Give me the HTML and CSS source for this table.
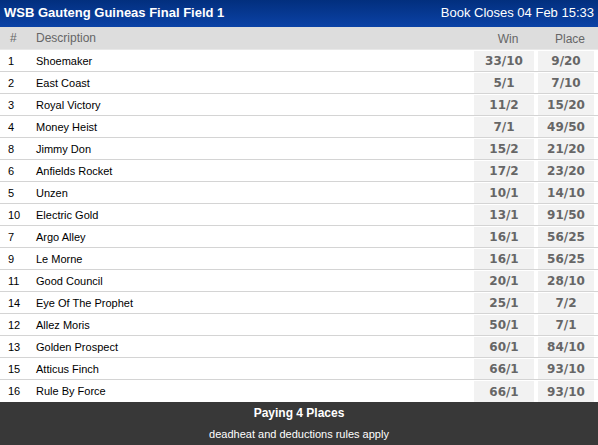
FILE: index.html
```html
<!DOCTYPE html>
<html>
<head>
<meta charset="utf-8">
<link rel="stylesheet" href="styles.css">
</head>
<body>
<div class="card">
  <div class="title">
    <span class="event">WSB Gauteng Guineas Final Field 1</span>
    <span class="closes">Book Closes 04 Feb 15:33</span>
  </div>
  <div class="row head">
    <div class="num">#</div>
    <div class="desc">Description</div>
    <div class="odds"><span>Win</span></div>
    <div class="odds place"><span>Place</span></div>
  </div>
  <div class="row"><div class="num">1</div><div class="desc">Shoemaker</div><div class="odds"><span>33/10</span></div><div class="odds place"><span>9/20</span></div></div>
  <div class="row"><div class="num">2</div><div class="desc">East Coast</div><div class="odds"><span>5/1</span></div><div class="odds place"><span>7/10</span></div></div>
  <div class="row"><div class="num">3</div><div class="desc">Royal Victory</div><div class="odds"><span>11/2</span></div><div class="odds place"><span>15/20</span></div></div>
  <div class="row"><div class="num">4</div><div class="desc">Money Heist</div><div class="odds"><span>7/1</span></div><div class="odds place"><span>49/50</span></div></div>
  <div class="row"><div class="num">8</div><div class="desc">Jimmy Don</div><div class="odds"><span>15/2</span></div><div class="odds place"><span>21/20</span></div></div>
  <div class="row"><div class="num">6</div><div class="desc">Anfields Rocket</div><div class="odds"><span>17/2</span></div><div class="odds place"><span>23/20</span></div></div>
  <div class="row"><div class="num">5</div><div class="desc">Unzen</div><div class="odds"><span>10/1</span></div><div class="odds place"><span>14/10</span></div></div>
  <div class="row"><div class="num">10</div><div class="desc">Electric Gold</div><div class="odds"><span>13/1</span></div><div class="odds place"><span>91/50</span></div></div>
  <div class="row"><div class="num">7</div><div class="desc">Argo Alley</div><div class="odds"><span>16/1</span></div><div class="odds place"><span>56/25</span></div></div>
  <div class="row"><div class="num">9</div><div class="desc">Le Morne</div><div class="odds"><span>16/1</span></div><div class="odds place"><span>56/25</span></div></div>
  <div class="row"><div class="num">11</div><div class="desc">Good Council</div><div class="odds"><span>20/1</span></div><div class="odds place"><span>28/10</span></div></div>
  <div class="row"><div class="num">14</div><div class="desc">Eye Of The Prophet</div><div class="odds"><span>25/1</span></div><div class="odds place"><span>7/2</span></div></div>
  <div class="row"><div class="num">12</div><div class="desc">Allez Moris</div><div class="odds"><span>50/1</span></div><div class="odds place"><span>7/1</span></div></div>
  <div class="row"><div class="num">13</div><div class="desc">Golden Prospect</div><div class="odds"><span>60/1</span></div><div class="odds place"><span>84/10</span></div></div>
  <div class="row"><div class="num">15</div><div class="desc">Atticus Finch</div><div class="odds"><span>66/1</span></div><div class="odds place"><span>93/10</span></div></div>
  <div class="row last"><div class="num">16</div><div class="desc">Rule By Force</div><div class="odds"><span>66/1</span></div><div class="odds place"><span>93/10</span></div></div>
  <div class="footer">
    <div class="paying">Paying 4 Places</div>
    <div class="rules">deadheat and deductions rules apply</div>
  </div>
</div>
</body>
</html>
```

FILE: styles.css
```css
html, body {
  margin: 0;
  padding: 0;
  background: #fff;
}
.card {
  width: 598px;
  height: 445px;
  display: flex;
  flex-direction: column;
  font-family: "Liberation Sans", Arial, sans-serif;
  overflow: hidden;
}
.title {
  height: 27px;
  box-sizing: border-box;
  display: flex;
  align-items: center;
  justify-content: space-between;
  padding: 0 4px 2px 4px;
  background: linear-gradient(#022f7e, #0b42a6);
  color: #fff;
}
.event {
  font-weight: bold;
  font-size: 13px;
}
.closes {
  font-size: 13px;
}
.row {
  display: flex;
  height: 22px;
  box-sizing: border-box;
  border-bottom: 1px solid #d4d4d4;
  font-size: 11px;
  color: #000;
}
.row.last {
  border-bottom: none;
}
.num {
  width: 36px;
  box-sizing: border-box;
  padding-left: 8px;
  display: flex;
  align-items: center;
}
.desc {
  flex: 1;
  display: flex;
  align-items: center;
}
.odds {
  width: 64px;
  box-sizing: border-box;
  padding: 1px 2px 0 2px;
  display: flex;
}
.odds.place {
  width: 60px;
  margin-right: 2px;
}
.odds span {
  flex: 1;
  display: flex;
  align-items: center;
  justify-content: center;
  background: #f2f2f2;
  color: #666;
  font-family: "DejaVu Sans", Verdana, sans-serif;
  font-weight: bold;
  font-size: 12px;
}
.row.head {
  height: 23px;
  background: #dddddd;
  border-bottom: 1px solid #e8e8e8;
  color: #666;
  font-size: 12px;
}
.row.head .num {
  padding-left: 10px;
}
.row.head .odds span {
  background: transparent;
  color: #666;
  padding-left: 8px;
  font-family: "Liberation Sans", Arial, sans-serif;
  font-weight: normal;
  font-size: 12px;
}
.footer {
  flex: 1;
  background: #383838;
  color: #fff;
  display: flex;
  flex-direction: column;
  align-items: center;
}
.paying {
  margin-top: 4px;
  font-size: 12px;
  font-weight: bold;
}
.rules {
  margin-top: 8px;
  font-size: 11px;
}
```
